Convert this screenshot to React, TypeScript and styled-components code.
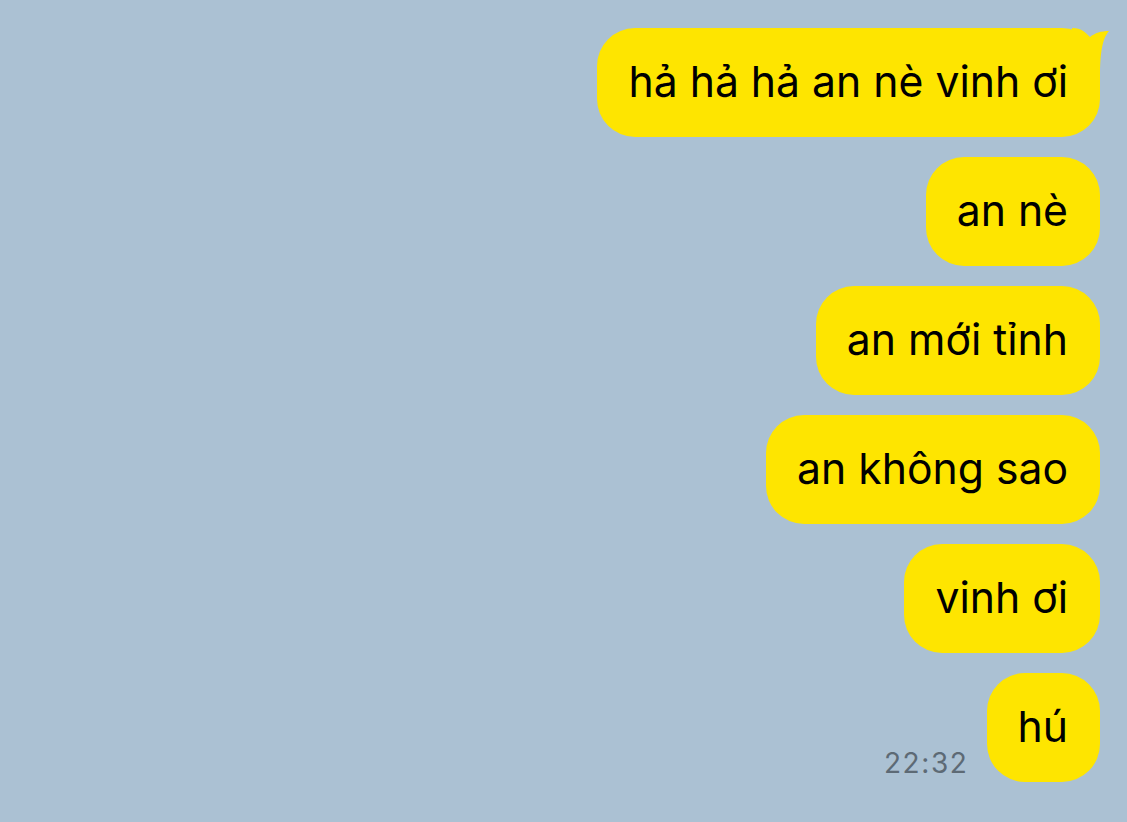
import React from "react";
import styled, { createGlobalStyle } from "styled-components";

const Global = createGlobalStyle`
  html, body { margin: 0; padding: 0; background: #abc1d3; }
  body { width: 1127px; height: 822px; overflow: hidden; }
`;

const Screen = styled.div`
  width: 1127px;
  height: 822px;
  background: #abc1d3;
  box-sizing: border-box;
  padding: 28px 27px 0 0;
  display: flex;
  flex-direction: column;
  align-items: flex-end;
  gap: 20px;
  font-family: Inter, "Noto Sans", sans-serif;
`;

const Row = styled.div`
  display: flex;
  align-items: flex-end;
  gap: 20px;
`;

const Bubble = styled.div`
  position: relative;
  height: 109px;
  box-sizing: border-box;
  padding: 0 32px 2px 31px;
  display: flex;
  align-items: center;
  background: #fee500;
  border-radius: 38px;
  color: #000;
  font-size: 42.7px;
  white-space: nowrap;
`;

const Tail = styled.svg`
  position: absolute;
  top: 0;
  right: -10px;
  width: 38px;
  height: 50px;
`;

const Time = styled.span`
  font-size: 28px;
  color: #5d6a75;
  letter-spacing: 1.6px;
  line-height: 1;
  margin-bottom: 5px;
  margin-right: -2px;
`;

const msgs = ["an nè", "an mới tỉnh", "an không sao", "vinh ơi"];

export default function App() {
  return (
    <>
      <Global />
      <Screen>
        <Bubble>
          hả hả hả an nè vinh ơi
          <Tail viewBox="0 0 38 50">
            <path
              d="M0 0 C10 0 14 5 18 9 C23 5 29 3 37 3 C31 10 28 22 28 50 L0 50 Z"
              fill="#fee500"
            />
          </Tail>
        </Bubble>
        {msgs.map((m) => (
          <Bubble key={m}>{m}</Bubble>
        ))}
        <Row>
          <Time>22:32</Time>
          <Bubble>hú</Bubble>
        </Row>
      </Screen>
    </>
  );
}
